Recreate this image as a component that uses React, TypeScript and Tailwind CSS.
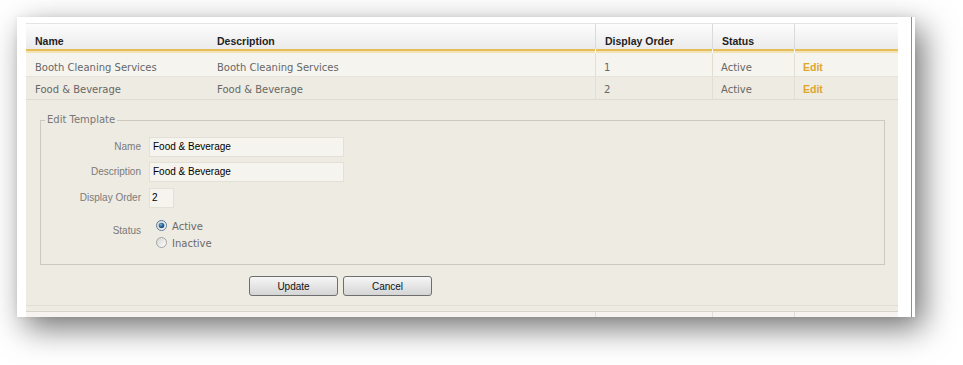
import React from "react";

const cols = "grid grid-cols-[182px_387px_117px_82px_104px]";
const dataFont = { fontFamily: '"DejaVu Sans", Verdana, sans-serif' };
const headFont = { fontFamily: '"Liberation Sans", Tahoma, Arial, sans-serif' };

const rows = [
  { name: "Booth Cleaning Services", description: "Booth Cleaning Services", order: "1", status: "Active" },
  { name: "Food & Beverage", description: "Food & Beverage", order: "2", status: "Active" },
];

function Radio({ checked }: { checked: boolean }) {
  return (
    <svg width="11" height="11" viewBox="0 0 11 11" className="shrink-0">
      <defs>
        <linearGradient id={checked ? "rOn" : "rOff"} x1="0" y1="0" x2="1" y2="1">
          <stop offset="0" stopColor="#d4d4d4" />
          <stop offset="1" stopColor="#ffffff" />
        </linearGradient>
        <radialGradient id="dot" cx="0.4" cy="0.35" r="0.7">
          <stop offset="0" stopColor="#7fb4d8" />
          <stop offset="0.5" stopColor="#2a6a98" />
          <stop offset="1" stopColor="#123f62" />
        </radialGradient>
      </defs>
      <circle
        cx="5.5"
        cy="5.5"
        r="5"
        fill={`url(#${checked ? "rOn" : "rOff"})`}
        stroke={checked ? "#5d7b99" : "#a3a3a3"}
        strokeWidth="1"
      />
      {checked && <circle cx="5.5" cy="5.5" r="2.8" fill="url(#dot)" />}
    </svg>
  );
}

export default function App() {
  return (
    <div className="w-[963px] h-[365px] bg-white pl-[17px] pt-[17px] overflow-hidden">
      <div className="w-[898px] h-[300px] bg-white flex pr-[3px] overflow-hidden shadow-[8px_11px_30px_rgba(0,0,0,0.55),0_0_6px_rgba(0,0,0,0.06)]">
        <div className="flex-1 border-r border-[#8e8e8e] pl-[9px] pt-[6px]">
          <div className="w-[872px]">
            {/* Header */}
            <div className={cols}>
              {["Name", "Description", "Display Order", "Status", ""].map((h, i) => (
                <div key={i} className="flex flex-col bg-white">
                  <div
                    className={`h-[26px] pt-[11px] pl-[9px] border-t border-[#e4e4e4] bg-linear-to-b from-[#fdfdfd] to-[#ebebeb] text-[10.5px] leading-[12px] font-bold text-[#1e1e1e] ${
                      i >= 2 ? "border-l border-l-[#dadada]" : ""
                    }`}
                    style={headFont}
                  >
                    {h}
                  </div>
                  <div className={`h-[4px] border-t-2 border-[#e5bd5a] bg-[#f5e4b3] ${i >= 2 ? "ml-px" : ""}`} />
                </div>
              ))}
            </div>

            {/* Data rows */}
            {rows.map((r, idx) => (
              <div
                key={r.name}
                className={`${cols} border-b ${
                  idx === 0
                    ? "h-[24px] bg-[#f6f4ef] border-[#e7e3da]"
                    : "h-[23px] bg-[#eeebe2] border-[#e0dcd1]"
                } text-[10px] leading-[12px] text-[#676767]`}
                style={dataFont}
              >
                <div className={`pl-[9px] ${idx === 0 ? "pt-[9px]" : "pt-[7px]"}`}>{r.name}</div>
                <div className={`pl-[9px] ${idx === 0 ? "pt-[9px]" : "pt-[7px]"}`}>{r.description}</div>
                <div className={`pl-[8px] border-l border-[#e2ded3] ${idx === 0 ? "pt-[9px]" : "pt-[7px]"}`}>{r.order}</div>
                <div className={`pl-[8px] border-l border-[#e2ded3] ${idx === 0 ? "pt-[9px]" : "pt-[7px]"}`}>{r.status}</div>
                <div
                  className={`pl-[8px] border-l border-[#e2ded3] font-bold text-[10.5px] text-[#dea62c] ${
                    idx === 0 ? "pt-[8px]" : "pt-[6px]"
                  }`}
                  style={headFont}
                >
                  Edit
                </div>
              </div>
            ))}

            {/* Edit panel */}
            <div className="bg-[#eeebe2] pt-[14px] border-b border-[#d8d4c8]">
              <fieldset className="ml-[14px] w-[845px] border border-[#cdc9bf] pb-[13px]">
                <legend
                  className="ml-[4px] px-[2px] text-[10px] leading-[12px] text-[#777777]"
                  style={dataFont}
                >
                  Edit Template
                </legend>
                <div className="grid grid-cols-[100px_auto] gap-x-[8px] gap-y-[5px] pt-[11px] items-start">
                  <label className="text-right text-[10px] leading-[20px] text-[#7a7a7a]" style={headFont}>
                    Name
                  </label>
                  <div
                    className="w-[195px] h-[20px] bg-[#f6f4ef] border border-[#e3e0d7] pl-[3px] text-[10px] leading-[18px] text-black"
                    style={headFont}
                  >
                    Food &amp; Beverage
                  </div>
                  <label className="text-right text-[10px] leading-[20px] text-[#7a7a7a]" style={headFont}>
                    Description
                  </label>
                  <div
                    className="w-[195px] h-[20px] bg-[#f6f4ef] border border-[#e3e0d7] pl-[3px] text-[10px] leading-[18px] text-black"
                    style={headFont}
                  >
                    Food &amp; Beverage
                  </div>
                  <label className="text-right text-[10px] leading-[20px] text-[#7a7a7a] mt-[1px]" style={headFont}>
                    Display Order
                  </label>
                  <div
                    className="w-[25px] h-[20px] mt-[1px] bg-[#f6f4ef] border border-[#e3e0d7] pl-[2px] text-[10px] leading-[18px] text-black"
                    style={headFont}
                  >
                    2
                  </div>
                  <label
                    className="text-right text-[10px] leading-[12px] text-[#7a7a7a] mt-[4px] pt-[8px]"
                    style={headFont}
                  >
                    Status
                  </label>
                  <div className="mt-[4px] flex flex-col pl-[7px] text-[10px] text-[#6a6a6a]" style={dataFont}>
                    <div className="h-[17px] flex items-center gap-[5px]">
                      <Radio checked />
                      <span className="leading-[12px] pt-[2px]">Active</span>
                    </div>
                    <div className="h-[17px] flex items-center gap-[5px]">
                      <Radio checked={false} />
                      <span className="leading-[12px] pt-[2px]">Inactive</span>
                    </div>
                  </div>
                </div>
              </fieldset>

              <div className="flex gap-[5px] pl-[223px] mt-[11px]">
                {["Update", "Cancel"].map((b) => (
                  <button
                    key={b}
                    className="w-[89px] h-[20px] rounded-[3px] border border-[#6e6e6e] bg-linear-to-b from-[#f6f6f6] to-[#d5d5d5] text-[10px] text-[#111111]"
                    style={headFont}
                  >
                    {b}
                  </button>
                ))}
              </div>
              <div className="mt-[9px] h-px bg-[#e2ded4]" />
              <div className="h-[5px]" />
            </div>

            {/* Next row (cut off) */}
            <div className={`${cols} h-[20px] bg-[#f6f3f0]`}>
              <div />
              <div />
              <div className="border-l border-[#e2ded3]" />
              <div className="border-l border-[#e2ded3]" />
              <div className="border-l border-[#e2ded3]" />
            </div>
          </div>
        </div>
      </div>
    </div>
  );
}
